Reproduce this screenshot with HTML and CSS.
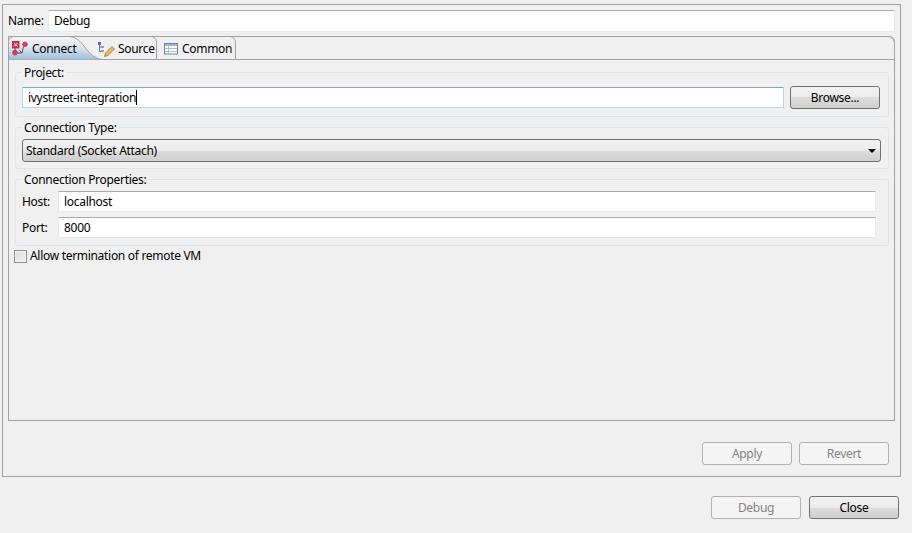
FILE: index.html
```html
<!DOCTYPE html>
<html lang="en">
<head>
<meta charset="utf-8">
<title>Debug Configuration</title>
<link rel="stylesheet" href="styles.css">
</head>
<body>
<div class="panel">
  <div class="name-row">
    <span class="name-label">Name:</span>
    <div class="field name-field">Debug</div>
  </div>
  <div class="folder">
    <div class="tabs">
      <svg class="tab-shape" width="886" height="24" viewBox="0 0 886 24">
        <defs>
          <linearGradient id="sel" x1="0" y1="0" x2="0" y2="1">
            <stop offset="0" stop-color="#f4f5f7"/>
            <stop offset="0.4" stop-color="#e2e9f0"/>
            <stop offset="1" stop-color="#a3bfda"/>
          </linearGradient>
        </defs>
        <path d="M0.500 23.500V6C0.500 3 3 0.500 6 0.500H60C67 0.500 71 4 76 10C81 16 85 22 94 23.500Z" fill="url(#sel)"/>
        <path d="M0.500 24V6C0.500 3 3 0.500 6 0.500H60C67 0.500 71 4 76 10C81 16 85 22 94 23.500" fill="none" stroke="#a3a3a3"/>
        <path d="M60 0.500H143C146 0.500 148.500 3 148.500 6V23.500" fill="none" stroke="#a3a3a3"/>
        <path d="M148 0.500H222C225 0.500 227.500 3 227.500 6V23.500" fill="none" stroke="#a3a3a3"/>
      </svg>
      <div class="tab tab-connect">
        <svg class="ico" width="18" height="16" viewBox="0 0 18 16">
          <rect x="0.500" y="0.500" width="6.500" height="6.500" fill="#d9344a" stroke="#a81f33" stroke-width=".8"/>
          <path d="M2 2l3.500 3.500M5.500 2L2 5.500" stroke="#fff" stroke-width=".9"/>
          <circle cx="3" cy="11.700" r="2.400" fill="#e8384f" stroke="#b8263a" stroke-width=".6"/>
          <circle cx="13" cy="3.300" r="2.400" fill="#e8384f" stroke="#b8263a" stroke-width=".6"/>
          <path d="M3 7v2.500M5.500 12H10L11.500 5.500M7.500 9.500L10 12" stroke="#5a3a3a" fill="none" stroke-width=".9"/>
        </svg>
        <span>Connect</span>
      </div>
      <div class="tab tab-source">
        <svg class="ico" width="18" height="16" viewBox="0 0 18 16">
          <rect x="0" y="1" width="3" height="3" fill="#4f78a8"/>
          <rect x="3" y="5" width="3" height="2" fill="#7ea0c6"/>
          <rect x="3" y="9" width="3" height="2" fill="#7ea0c6"/>
          <path d="M1.500 4v6.500H3M1.500 6H3" stroke="#4d6d96" fill="none" stroke-width=".9"/>
          <path d="M6.500 15.500l1-3.500 6.500-6.500 2.500 2.500-6.500 6.500z" fill="#e3b867" stroke="#94773c" stroke-width=".8"/>
        </svg>
        <span>Source</span>
      </div>
      <div class="tab tab-common">
        <svg class="ico" width="14" height="12" viewBox="0 0 14 12">
          <rect x="0.500" y="0.500" width="13" height="10.500" fill="#fff" stroke="#6a86a8"/>
          <rect x="1" y="1" width="12" height="2" fill="#9db6d2"/>
          <path d="M1 5.500h12M1 8.500h12M4.500 3v8" stroke="#a9c0da" fill="none"/>
        </svg>
        <span>Common</span>
      </div>
    </div>
    <div class="folder-body">
      <fieldset class="group group-project">
        <legend>Project:</legend>
        <div class="project-row">
          <div class="field field-focus">ivystreet-integration<span class="caret"></span></div>
          <div class="btn btn-browse">Browse...</div>
        </div>
      </fieldset>
      <fieldset class="group group-type">
        <legend>Connection Type:</legend>
        <div class="combo">
          <span>Standard (Socket Attach)</span>
          <span class="arrow"></span>
        </div>
      </fieldset>
      <fieldset class="group group-props">
        <legend>Connection Properties:</legend>
        <div class="prop-row">
          <span class="prop-label">Host:</span>
          <div class="field prop-field">localhost</div>
        </div>
        <div class="prop-row">
          <span class="prop-label">Port:</span>
          <div class="field prop-field">8000</div>
        </div>
      </fieldset>
      <div class="check-row">
        <span class="checkbox"></span>
        <span>Allow termination of remote VM</span>
      </div>
    </div>
  </div>
  <div class="actions">
    <div class="btn btn-off">Apply</div>
    <div class="btn btn-off">Revert</div>
  </div>
</div>
<div class="footer">
  <div class="btn btn-off">Debug</div>
  <div class="btn btn-close">Close</div>
</div>
</body>
</html>
```
FILE: styles.css
```css
* { box-sizing: border-box; }
html, body { margin: 0; padding: 0; }
body {
  width: 912px;
  height: 533px;
  overflow: hidden;
  background: #f0f0f0;
  font-family: "Noto Sans", "Open Sans", sans-serif;
  font-size: 12px;
  letter-spacing: -0.3px;
  line-height: 16px;
  color: #000;
  padding-top: 4px;
}
.panel {
  margin-left: 2px;
  width: 899px;
  height: 473px;
  border: 1px solid #a0a0a0;
  padding: 5px 5px 0 5px;
}
.name-row { display: flex; align-items: center; height: 22px; }
.name-label { width: 40px; }
.field {
  height: 21px;
  background: #fff;
  border: 1px solid #e3e9ef;
  border-top-color: #ababab;
  border-radius: 1px;
  padding: 2px 5px 0;
  white-space: nowrap;
}
.name-field { flex: 1; height: 22px; }
.folder {
  margin-top: 4px;
  height: 385px;
  border: 1px solid #a0a0a0;
  border-top: 0;
  border-top-right-radius: 6px;
  display: flex;
  flex-direction: column;
}
.tabs {
  position: relative;
  height: 24px;
  flex: none;
  display: flex;
  align-items: center;
  padding-top: 1px;
  border-top: 1px solid #a3a3a3;
  border-bottom: 1px solid #a3a3a3;
  border-top-right-radius: 7px;
  border-right: 1px solid #a3a3a3;
  margin: 0 -1px 0 -1px;
}
.tab-shape { position: absolute; left: 0; top: -1px; }
.tab { position: relative; display: flex; align-items: center; }
.tab-connect { width: 90px; padding-left: 4px; }
.tab-connect span { margin-left: 2px; }
.tab-source { width: 66px; }
.tab-source span { margin-left: 2px; }
.tab-common { margin-left: 0; }
.tab-common span { margin-left: 4px; }
.ico { flex: none; }
.folder-body { flex: 1; padding: 4px 5px 0 6px; }
.group {
  margin: 0;
  padding: 0;
  border: 1px solid #dce5ee;
  border-radius: 3px;
  min-width: 0;
}
.group legend {
  margin-left: 0;
  padding: 0 2px;
  height: 16px;
  line-height: 18px;
}
.group-project { height: 53px; padding: 6px 8px 0 6px; }
.group-type { height: 50px; padding: 4px 7px 0 6px; margin-top: 2px; }
.group-props { height: 75px; padding: 4px 12px 0 6px; margin-top: 2px; }
.project-row { display: flex; gap: 6px; align-items: center; }
.project-row .field { flex: 1; border-color: #b8d4e8; border-top-color: #7aa8c8; height: 21px; }
.caret { display: inline-block; width: 1px; height: 15px; background: #000; vertical-align: -3px; }
.btn {
  width: 90px;
  height: 23px;
  border: 1px solid #707070;
  border-radius: 3px;
  text-align: center;
  line-height: 22px;
  background: linear-gradient(#f2f2f2 0, #ebebeb 50%, #dddddd 50%, #cfcfcf 100%);
  flex: none;
}
.btn-off {
  border-color: #adb2b5;
  color: #838383;
  background: #f4f4f4;
}
.combo {
  height: 23px;
  border: 1px solid #707070;
  border-radius: 3px;
  background: linear-gradient(#f2f2f2 0, #ebebeb 50%, #dddddd 50%, #cfcfcf 100%);
  display: flex;
  align-items: center;
  justify-content: space-between;
  padding: 0 4px 0 3px;
}
.arrow {
  width: 0;
  height: 0;
  border-left: 4px solid transparent;
  border-right: 4px solid transparent;
  border-top: 4px solid #000;
}
.prop-row { display: flex; align-items: center; height: 21px; margin-bottom: 5px; }
.prop-label { width: 36px; }
.prop-field { flex: 1; }
.check-row { display: flex; align-items: center; gap: 3px; margin-top: 2px; height: 16px; margin-left: -1px; }
.checkbox {
  width: 13px;
  height: 13px;
  margin-top: 1px;
  border: 1px solid #8e8f8f;
  background: linear-gradient(135deg, #dcdcdc, #f4f4f4);
  box-shadow: inset 0 0 0 1px #f4f4f4;
}
.actions {
  display: flex;
  justify-content: flex-end;
  gap: 7px;
  margin-top: 21px;
  padding-right: 6px;
}
.footer {
  display: flex;
  justify-content: flex-end;
  gap: 8px;
  padding-right: 13px;
  margin-top: 19px;
}
.btn-close { border-color: #707070; }
```
